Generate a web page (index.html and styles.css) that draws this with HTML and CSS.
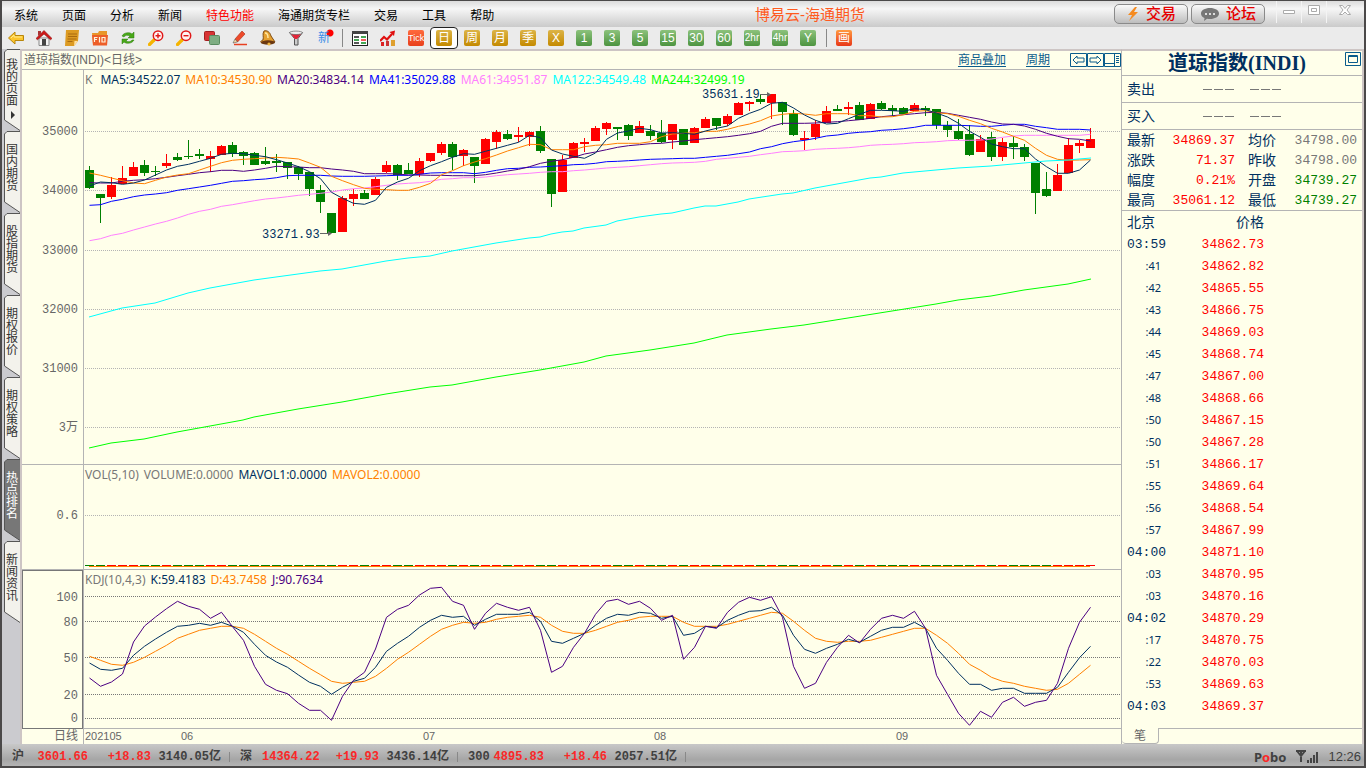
FILE: index.html
```html
<!DOCTYPE html>
<html lang="zh-CN">
<head>
<meta charset="utf-8">
<title>博易云-海通期货</title>
<link rel="stylesheet" href="styles.css">
</head>
<body>
<div class="app">
  <header class="menubar">
    <nav class="menus">
      <button>系统</button><button>页面</button><button>分析</button><button>新闻</button><button class="hot">特色功能</button><button>海通期货专栏</button><button>交易</button><button>工具</button><button>帮助</button>
    </nav>
    <h1 class="app-title">博易云-海通期货</h1>
    <div class="window-side">
      <button class="pill"><svg width="14" height="16" viewBox="0 0 14 16"><path d="M9 1L2 9h4l-3 6 9-9H8l3-5z" fill="#f58a1f"/></svg>交易</button>
      <button class="pill"><svg width="20" height="16" viewBox="0 0 20 16"><path d="M10 2c5 0 9 2.300 9 5.500S15 13 10 13c-1 0-2 0-3-.3L4 15l.5-3C2.300 11 1 9.500 1 7.500 1 4.300 5 2 10 2z" fill="#777"/><path d="M5 7h2v2H5zM9 7h2v2H9zM13 7h2v2h-2z" fill="#ddd"/></svg>论坛</button>
      <div class="win-controls">
        <button aria-label="最小化"><svg width="14" height="12" viewBox="0 0 14 12"><path d="M1.500 6.500h11v3h-11z" fill="#fff" stroke="#aaa"/></svg></button>
        <button aria-label="还原"><svg width="14" height="12" viewBox="0 0 14 12"><path d="M1.500 1.500h11v9h-11zM4.500 4.500h5v3h-5z" fill="#fff" stroke="#aaa"/></svg></button>
        <button aria-label="关闭"><svg width="14" height="12" viewBox="0 0 14 12"><path d="M1.500 1.500h3l2.500 3 2.500-3h3L9 6l3.500 4.500h-3L7 8l-2.500 2.500h-3L5 6z" fill="#fff" stroke="#aaa"/></svg></button>
      </div>
    </div>
  </header>

  <div class="toolbar">
    <button aria-label="后退"><svg viewBox="0 0 16 16"><path d="M.5 8L7 2v3.500h8.500v5H7V14z" fill="#fcc52c" stroke="#b8860b"/><path d="M3 8l3-3v2h8" fill="none" stroke="#ffe98a"/></svg></button>
    <button aria-label="首页"><svg viewBox="0 0 16 16"><path d="M3 8h10v7.500H3z" fill="#f4f4f4" stroke="#888"/><path d="M0 8.500L8 .5l8 8-1.500 1.200L8 4 1.500 9.700z" fill="#d01818" stroke="#8c1010" stroke-width=".6"/><path d="M2 1h3v3L2 6z" fill="#a33"/><path d="M6 9h4v6.500H6z" fill="#444"/></svg></button>
    <button aria-label="便笺"><svg viewBox="0 0 16 16"><path d="M2 0h13l-1 11-4 5H1z" fill="#dc9a22"/><path d="M10 16l.5-5H14z" fill="#ffe0a0"/><path d="M4 4h9M4 6.500h9M3.500 9h9M3.500 11.500h5" stroke="#a96a10"/></svg></button>
    <button aria-label="F10"><svg viewBox="0 0 16 16"><path d="M0 3h6l1-2h8v13H1z" fill="#e8962a"/><path d="M0 5h16l-1 10.500H1z" fill="#ed5e28"/><path d="M2.500 12V7.500h3M2.500 9.500H5M7.500 7v5.500M10 7.500h3V12h-3z" stroke="#fff3dc" stroke-width="1.200" fill="none"/></svg></button>
    <button aria-label="刷新"><svg viewBox="0 0 16 16"><path d="M2 6c2-4 8-4 10-2l2-2v6H8l2-2C8 5 5 5 4 7zM14 10c-2 4-8 4-10 2l-2 2V9h6l-2 2c2 1 5 1 6-1z" fill="#48a818" stroke="#2b7a0c" stroke-width=".5"/></svg></button>
    <button aria-label="放大"><svg viewBox="0 0 16 16"><path d="M1.500 14.500L6 10" stroke="#f5b400" stroke-width="3.200" stroke-linecap="round"/><circle cx="10" cy="5.700" r="4.700" fill="#fff3f3" stroke="#e01818" stroke-width="1.500"/><path d="M7.500 5.700h5M10 3.200v5" stroke="#e01818" stroke-width="1.400"/></svg></button>
    <button aria-label="缩小"><svg viewBox="0 0 16 16"><path d="M1.500 14.500L6 10" stroke="#f5b400" stroke-width="3.200" stroke-linecap="round"/><circle cx="10" cy="5.700" r="4.700" fill="#fff3f3" stroke="#e01818" stroke-width="1.500"/><path d="M7.500 5.700h5" stroke="#e01818" stroke-width="1.400"/></svg></button>
    <button aria-label="叠加"><svg viewBox="0 0 16 16"><rect x=".5" y="1.500" width="10" height="9" rx="1" fill="#d83434" stroke="#a32020"/><rect x="5.500" y="5.500" width="10" height="9" rx="1" fill="#7fae83" stroke="#5a8c60"/></svg></button>
    <button aria-label="画线"><svg viewBox="0 0 16 16"><path d="M3 9l7-8 3 3-7.500 8z" fill="#ee4a2a" stroke="#a82c14" stroke-width=".6"/><path d="M3 9l2.500 3L1 13z" fill="#f8d8a0" stroke="#444" stroke-width=".5"/><path d="M2 14.500h13" stroke="#e84020" stroke-width="1.500"/></svg></button>
    <button aria-label="预警"><svg viewBox="0 0 16 16"><path d="M4 1c3-1 6 1 7 5l4 6-12 1c-3 0-3-2 0-3 1-3-1-6 1-9z" fill="#e5a030" stroke="#804c10"/><path d="M5 3c2 0 3 2 3 5" stroke="#ffe6a0" stroke-width="1.500" fill="none"/><ellipse cx="8" cy="12.500" rx="7" ry="2.200" fill="#6b3810"/><circle cx="9" cy="14" r="1.600" fill="#f0b840"/></svg></button>
    <button aria-label="筛选"><svg viewBox="0 0 16 16"><path d="M1.500 2.500h13L10 8.500v6.500H6.500V8.500z" fill="#ccc" stroke="#555"/><path d="M3 4h10l-4 5H7z" fill="#e42438"/><ellipse cx="8" cy="2.800" rx="6.500" ry="1.700" fill="#eee" stroke="#666" stroke-width=".7"/></svg></button>
    <button class="new-mark">新</button>
    <i class="divider"></i>
    <button aria-label="列表"><svg viewBox="0 0 16 16"><rect x=".5" y="1.500" width="15" height="14" fill="#fff" stroke="#222"/><path d="M0 2.500h16" stroke="#444" stroke-width="3"/><path d="M2 7h5M2 13h5" stroke="#222" stroke-width="1.300"/><path d="M9 7h5M9 13h5M2 10h5" stroke="#098a1e" stroke-width="1.300"/><path d="M9 10h5" stroke="#e00" stroke-width="1.300"/></svg></button>
    <button aria-label="走势"><svg viewBox="0 0 16 16"><path d="M1 12h3v4H1z" fill="#d22"/><path d="M6 11h3v5H6z" fill="#c33"/><path d="M11 10h4v6h-4z" fill="#dfa030"/><path d="M0 11l4-4 3 2.500L12 4" stroke="#e01010" stroke-width="2.200" fill="none"/><path d="M9.500 2L15 .5 14 6z" fill="#e01010"/></svg></button>
    <button><span class="chip tick">Tick</span></button>
    <button class="selected"><span class="chip gold">日</span></button>
    <button><span class="chip gold">周</span></button>
    <button><span class="chip gold">月</span></button>
    <button><span class="chip gold">季</span></button>
    <button><span class="chip gold">X</span></button>
    <button><span class="chip green">1</span></button>
    <button><span class="chip green">3</span></button>
    <button><span class="chip green">5</span></button>
    <button><span class="chip green">15</span></button>
    <button><span class="chip green">30</span></button>
    <button><span class="chip green">60</span></button>
    <button><span class="chip green small">2hr</span></button>
    <button><span class="chip green small">4hr</span></button>
    <button><span class="chip green">Y</span></button>
    <i class="divider"></i>
    <button><span class="chip draw">画</span></button>
  </div>

  <main class="workspace">
    <aside class="side-tabs">
      <button><svg viewBox="0 0 16 82"><path d="M16 .5H3L.5 3v68L16 81.500"/></svg><span>我的页面</span><b></b></button>
      <button><svg viewBox="0 0 16 82"><path d="M16 .5H3L.5 3v68L16 81.500"/></svg><span>国内期货</span></button>
      <button><svg viewBox="0 0 16 82"><path d="M16 .5H3L.5 3v68L16 81.500"/></svg><span>股指期货</span></button>
      <button><svg viewBox="0 0 16 82"><path d="M16 .5H3L.5 3v68L16 81.500"/></svg><span>期权报价</span></button>
      <button><svg viewBox="0 0 16 82"><path d="M16 .5H3L.5 3v68L16 81.500"/></svg><span>期权策略</span></button>
      <button class="active"><svg viewBox="0 0 16 82"><path d="M16 .5H3L.5 3v68L16 81.500"/></svg><span>热点排名</span></button>
      <button><svg viewBox="0 0 16 82"><path d="M16 .5H3L.5 3v68L16 81.500"/></svg><span>新闻资讯</span></button>
    </aside>

    <section class="chart">
      <div class="chart-head">
        <span>道琼指数(INDI)&lt;日线&gt;</span>
        <div class="chart-links">
          <a href="#">商品叠加</a><a href="#">周期</a>
          <svg width="51" height="15" viewBox="0 0 51 15" fill="none" stroke="#0a5c8c"><path d="M.5.5h16v13H.5zM17.500.5h16v13h-16zM34.500.5h16v13h-16zM34.500 10.500h10M44.500.5v13M3 7l4-4v2h7v4H7v2zM31 7l-4-4v2h-7v4h7v2zM46 3.500h3M46 5.500h3M46 7.500h3M46 9.500h3"/></svg>
        </div>
      </div>
      <div class="panels">
        <svg class="axis" viewBox="0 0 61 394">
          <text x="56" y="65">35000</text><text x="56" y="124">34000</text><text x="56" y="184">33000</text><text x="56" y="243">32000</text><text x="56" y="302">31000</text><text x="56" y="361">3万</text>
        </svg>
        <div class="plot">
          <svg id="price" viewBox="0 0 1037 394" preserveAspectRatio="none"></svg>
          <p class="legend"><span class="c-gray key">K</span><span class="c-navy">MA5:34522.07</span><span class="c-orange">MA10:34530.90</span><span class="c-indigo">MA20:34834.14</span><span class="c-blue">MA41:35029.88</span><span class="c-pink">MA61:34951.87</span><span class="c-cyan">MA122:34549.48</span><span class="c-lime">MA244:32499.19</span></p>
        </div>
        <svg class="axis" viewBox="0 0 61 104"><text x="56" y="54">0.6</text></svg>
        <div class="plot">
          <svg id="volume" viewBox="0 0 1037 104" preserveAspectRatio="none"></svg>
          <p class="legend"><span class="c-gray">VOL(5,10)</span><span class="c-gray">VOLUME:0.0000</span><span class="c-navy">MAVOL1:0.0000</span><span class="c-orange">MAVOL2:0.0000</span></p>
        </div>
        <svg class="axis boxed" viewBox="0 0 59 156"><text x="55" y="29">100</text><text x="55" y="54">80</text><text x="55" y="90">50</text><text x="55" y="127">20</text><text x="55" y="150">0</text></svg>
        <div class="plot">
          <svg id="kdj" viewBox="0 0 1037 158" preserveAspectRatio="none"></svg>
          <p class="legend"><span class="c-gray">KDJ(10,4,3)</span><span class="c-navy">K:59.4183</span><span class="c-orange">D:43.7458</span><span class="c-indigo">J:90.7634</span></p>
        </div>
        <div class="period">日线</div>
        <svg class="dates" viewBox="0 0 1037 15" preserveAspectRatio="xMinYMid"><text x="1" y="11">202105</text><text x="97" y="11">06</text><text x="339" y="11">07</text><text x="570" y="11">08</text><text x="812" y="11">09</text></svg>
      </div>
    </section>

    <section class="quote">
      <div class="quote-title"><h2>道琼指数(INDI)</h2>
        <button aria-label="最大化"><svg width="16" height="14" viewBox="0 0 16 14" fill="none" stroke="#0a5c8c"><path d="M.5.5h15v13H.5zM3.500 3.500h9v7h-9zM3.500 4.500h9"/></svg></button>
      </div>
      <div class="side-row"><span>卖出</span><i></i><i></i><i></i><i class="far"></i><i></i><i></i></div>
      <div class="side-row"><span>买入</span><i></i><i></i><i></i><i class="far"></i><i></i><i></i></div>
      <table class="facts">
        <tr><th>最新</th><td class="up">34869.37</td><th>均价</th><td class="flat">34798.00</td></tr>
        <tr><th>涨跌</th><td class="up">71.37</td><th>昨收</th><td class="flat">34798.00</td></tr>
        <tr><th>幅度</th><td class="up">0.21%</td><th>开盘</th><td class="down">34739.27</td></tr>
        <tr><th>最高</th><td class="up">35061.12</td><th>最低</th><td class="down">34739.27</td></tr>
      </table>
      <table class="ticks">
        <thead><tr><th>北京</th><th>价格</th><th></th></tr></thead>
        <tbody id="ticks"></tbody>
      </table>
      <div class="quote-foot"><button>笔</button><i></i></div>
    </section>
  </main>

  <footer class="status">
    <div class="index"><span>沪</span><b>3601.66</b><b>+18.83</b><span>3140.05亿</span><i></i></div>
    <div class="index"><span>深</span><b>14364.22</b><b>+19.93</b><span>3436.14亿</span><i></i></div>
    <div class="index"><span>300</span><b>4895.83</b><b>+18.46</b><span>2057.51亿</span><i></i></div>
    <div class="status-right"><strong>P<em>o</em>bo</strong>
      <svg width="22" height="14" viewBox="0 0 22 14" fill="none" stroke="#444" stroke-width="2"><path d="M0 1h10M1 1l4 5 4-5M5 1v11M12 10v3M15 8v5M18 5v8M21 2v11" /></svg>
      <time>12:26</time></div>
  </footer>
</div>
<script src="app.js"></script>
</body>
</html>
```
FILE: styles.css
```css
* { box-sizing: border-box; }
body { margin: 0; font: 12px/16px "Liberation Sans", "Noto Sans CJK SC", sans-serif; color: #000; }
button { margin: 0; padding: 0; border: 0; background: none; font: inherit; color: inherit; }
h1, h2, p { margin: 0; font-weight: normal; }
i { font-style: normal; }
svg { display: block; }

.app { height: 100vh; display: flex; flex-direction: column; border: solid #4b4949; border-width: 1px 2px 2px; background: #ebebeb; overflow: hidden; }

.menubar { height: 26px; flex: none; display: flex; background: linear-gradient(#dcdcdc, #f6f6f6 30%, #cacaca); }
.menus { display: flex; }
.menus button { padding: 3px 12px 0; }
.menus .hot { color: #f00; }
.app-title { margin: 0 auto; font-size: 15px; line-height: 28px; color: #ff5a1e; white-space: nowrap; }
.window-side { display: flex; align-items: flex-start; gap: 3px; }
.pill { width: 74px; height: 20px; margin-top: 3px; display: flex; align-items: center; justify-content: center; gap: 6px; border: 1px solid #8a8a8a; border-radius: 5px; background: linear-gradient(#fafafa, #bdbdbd); font-size: 15px; font-weight: 500; color: #e60000; }
.win-controls { display: flex; margin-left: 8px; }
.win-controls button { width: 25px; height: 22px; padding: 1px 0 6px; display: grid; place-items: center; border-left: 1px solid #f4f4f4; }
.win-controls button:last-child { width: 38px; }

.toolbar { height: 22px; flex: none; display: flex; background: #ebebeb; }
.toolbar button { width: 28px; height: 22px; display: grid; place-items: center; }
.toolbar svg { width: 16px; height: 16px; }
.toolbar .divider { width: 8px; margin: 2px 0; background: linear-gradient(#888, #888) center / 1px 100% no-repeat; }
.toolbar .selected { border: 1px solid #222; border-radius: 4px; background: #fff; }
.toolbar .new-mark { color: #3d8ee8; background: radial-gradient(circle at 20px 6px, #f00 3px, transparent 4px); }
.chip { width: 16px; height: 16px; border-radius: 2px; color: #fff; font-size: 12px; line-height: 16px; text-align: center; overflow: hidden; }
.chip.gold { background: linear-gradient(#dcb448, #c48a00); }
.chip.green { background: linear-gradient(#8cc27c, #4d9440); }
.chip.draw { background: linear-gradient(#ff9a40, #e83818); }
.chip.tick { background: linear-gradient(#ff6a3c, #e8401c); font-size: 9px; }
.chip.small { font-size: 10px; }

.workspace { flex: 1; min-height: 0; display: flex; }
.side-tabs { width: 18px; flex: none; padding-left: 2px; background: #cbcbcf; }
.side-tabs button { display: flex; flex-direction: column; justify-content: flex-start; position: relative; width: 16px; height: 82px; padding: 13px 2px 0; color: #333; }
.side-tabs svg { position: absolute; inset: 0; width: 16px; height: 82px; fill: #f3f2ec; stroke: #555; z-index: 0; }
.side-tabs span { position: relative; display: block; width: 12px; line-height: 12px; word-break: break-all; }
.side-tabs button:first-child { padding-top: 10px; }
.side-tabs b { position: relative; display: block; width: 0; margin: 4px 0 0 5px; border: 4px solid transparent; border-left-color: #333; border-right: 0; }
.side-tabs .active { color: #fff; }
.side-tabs .active svg { fill: #777; }

.chart, .quote { border-top: 2px solid #cdc5c4; background: #ffffea; }
.chart { flex: 1; min-width: 0; display: flex; flex-direction: column; border-left: 2px solid #cdc5c4; }
.chart-head { height: 19px; flex: none; display: flex; align-items: center; justify-content: space-between; padding: 0 0 0 2px; border-bottom: 1px solid #b4b4b4; color: #666; }
.chart-links { display: flex; align-items: center; gap: 20px; }
.chart-links a { color: #0a5c8c; text-underline-offset: 2px; }
.panels { flex: 1; min-height: 0; display: grid; grid-template-columns: 61px minmax(0, 1fr); grid-template-rows: minmax(0, 395fr) minmax(0, 105fr) minmax(0, 159fr) 15px; }
.axis { width: 100%; height: 100%; border-bottom: 1px solid #b4b4b4; }
.axis text { font: 12px "Liberation Mono", "Noto Sans CJK SC", monospace; text-anchor: end; fill: #666; }
.axis.boxed { border: 1px solid #777; }
.plot { position: relative; border-left: 1px solid #b4b4b4; border-bottom: 1px solid #b4b4b4; }
.plot svg { width: 100%; height: 100%; }
.plot text { font: 12px "Liberation Mono", monospace; fill: #003060; }
.legend { position: absolute; left: 1px; top: 1px; display: flex; gap: 5px; font: 12px/17px "Noto Sans", sans-serif; white-space: nowrap; }
.legend .key { margin-right: 3px; }
.period { padding-right: 5px; text-align: right; line-height: 15px; color: #666; }
.dates { width: 100%; height: 100%; border-left: 1px solid #b4b4b4; }
.dates text { font: 11px "Liberation Sans", sans-serif; fill: #666; }

.c-gray { color: #777; }
.c-navy { color: #003060; }
.c-orange { color: #ff8000; }
.c-indigo { color: #4b0082; }
.c-blue { color: #00f; }
.c-pink { color: #ff80ff; }
.c-cyan { color: #0ff; }
.c-lime { color: #0f0; }

.grid-light { stroke: #b4b4b4; stroke-dasharray: 1 1; }
.grid-dark { stroke: #777; stroke-dasharray: 1 1; }
.line { fill: none; stroke-width: 1; }
.rise { fill: #f00; }
.fall { fill: #008000; }
.bars { shape-rendering: crispEdges; }

.quote { width: 243px; flex: none; display: flex; flex-direction: column; border-left: 1px solid #b4b4b4; border-right: 2px solid #cdc5c4; color: #003060; font-size: 14px; }
.quote-title { height: 25px; flex: none; display: flex; position: relative; justify-content: center; border-bottom: 1px solid #b4b4b4; }
.quote-title h2 { padding-right: 10px; font: bold 20px/24px "Liberation Serif", "Noto Sans CJK SC", serif; }
.quote-title button { position: absolute; right: 1px; top: 1px; }
.side-row { height: 27px; flex: none; display: flex; align-items: center; padding-left: 5px; border-bottom: 1px solid #b4b4b4; }
.side-row span { width: 76px; }
.side-row i { width: 9px; height: 1px; margin-right: 2px; background: #777; }
.side-row .far { margin-left: 14px; }
table { border-collapse: collapse; }
th, td { padding: 0; font-weight: normal; text-align: left; }
td { font: 13px "Liberation Mono", monospace; }
.facts { width: 230px; margin: 0 5px; table-layout: fixed; }
.facts tr { height: 20px; }
.facts th:first-child { width: 28px; }
.facts th { width: 40px; }
.facts td { text-align: right; }
.facts td:nth-child(2) { width: 93px; padding-right: 13px; }
.ticks { border-top: 1px solid #b4b4b4; table-layout: fixed; width: 100%; }
.ticks tr { height: 22px; }
.ticks td { padding-top: 2px; }
.ticks th:first-child, .ticks td:first-child { width: 60px; padding-left: 5px; }
.ticks th:nth-child(2), .ticks td:nth-child(2) { width: 82px; text-align: right; }
.ticks td:nth-child(2) { color: #f00; }
.ticks .sec { padding: 0 21px 0 0; text-align: right; font: 11px "Noto Sans", sans-serif; }
.up { color: #f00; }
.down { color: #008000; }
.flat { color: #777; }
.quote-foot { margin-top: auto; height: 16px; flex: none; display: flex; }
.quote-foot button { width: 37px; height: 16px; border: 1px solid #b4b4b4; border-width: 0 1px 1px 0; border-radius: 0 0 4px 4px; font-size: 12px; line-height: 14px; color: #666; }
.quote-foot i { flex: 1; border-top: 1px solid #b4b4b4; }

.status { height: 22px; flex: none; display: flex; align-items: center; padding: 3px 0 0 10px; background: linear-gradient(#c8c8c8, #a6a6a6 70%, #b4b4b4); font: bold 12px/16px "Liberation Mono", "Noto Sans CJK SC", monospace; color: #404040; }
.index { width: 228px; display: grid; grid-template-columns: 22px 54px 63px 70px 9px; text-align: right; }
.index span:first-child { text-align: left; }
.index b { color: #fa2828; }
.index i { margin: 3px 0; border-right: 1px solid #888; }
.status-right { margin-left: auto; padding-right: 3px; display: flex; align-items: center; gap: 10px; }
.status-right strong { font: bold 13px/16px "Noto Sans", sans-serif; }
.status-right em { font-style: normal; color: #fa2828; }
.status-right time { font: 13px/16px "Liberation Sans", sans-serif; }
```
FILE: app.js
```js
const STEP = 11, UNIT = 3;

// Each session: direction, high, body top, body bottom, low (in thirds of a pixel).
const candles = `G258,270,324,327 G342,342,354,429 R291,315,351,357 R258,294,312,312 R246,261,288,288 G240,255,279,288
G258,273,276,288 R222,249,258,264 G219,231,240,243 G180,228,231,237 G207,222,228,237 R213,228,237,276 R195,198,225,225
G186,195,222,231 G213,216,228,255 G216,219,255,255 G201,243,252,255 G222,243,249,276 G246,246,264,297 G258,261,282,300
G276,276,327,348 G315,330,366,399 G399,399,459,459 R348,354,456,456 R327,342,357,378 G330,339,357,357 R291,297,345,345
R243,255,276,279 G252,255,285,300 G249,270,282,282 R234,243,282,291 R219,219,243,246 R186,192,219,225 G186,192,231,270
R207,210,228,258 G231,231,258,309 R174,177,252,252 R150,156,186,207 G150,162,177,180 R141,165,171,186 R153,156,171,198
G138,153,213,219 G237,237,342,381 R225,240,336,336 R186,189,234,234 R174,186,192,216 R138,144,183,183 R126,129,147,165
G141,141,147,180 G132,135,168,180 R123,138,159,159 G135,153,168,180 G120,159,186,189 R132,132,180,207 G147,147,195,195
R141,144,189,189 R111,117,144,144 G114,114,138,150 R102,108,132,138 R66,69,105,105 R63,66,72,93 G42,57,66,72
R42,42,69,117 G66,66,96,135 G90,99,165,168 R153,174,180,210 R120,132,171,180 R78,93,129,129 G75,87,93,93
R66,81,87,105 G66,75,120,120 R69,72,117,117 G63,69,87,90 G75,84,93,108 G81,84,102,102 R69,75,93,93 G78,84,90,108
G87,87,135,147 G123,135,150,171 G117,153,177,180 G135,162,225,228 R165,177,216,216 G156,171,231,243 R174,186,231,243
G168,189,201,237 G192,201,231,243 G249,249,339,402 G276,327,348,351 R252,285,333,333 R174,195,279,279 R180,189,198,219
R144,177,204,204`.split(/\s+/).map(s => ({ rise: s[0] === "R", v: s.slice(1).split(",").map(Number) }));

const averages = [
  ["#ff80ff", "482,476,466,460,450,441,432,424,414,403,394,388,379,374,368,362,357,354,350,346,343,340,336,330,326,324,320,316,312,310,308,304,298,296,293,293,291,287,284,282,280,277,275,275,272,270,267,264,262,260,257,254,251,249,248,247,244,238,235,232,229,224,220,215,214,212,208,206,205,203,200,196,194,193,191,188,187,185,182,181,181,180,177,172,168,166,166,166,166,166,166,163"],
  ["#0000ff", "376,374,364,358,350,345,342,338,331,326,321,316,310,304,302,299,297,293,287,286,286,286,288,289,289,289,288,287,286,286,283,279,278,278,278,281,277,271,266,265,262,261,259,257,254,253,250,245,244,242,240,238,237,236,235,235,232,229,226,221,216,206,200,191,185,181,175,168,165,160,157,155,151,149,146,142,136,136,136,136,137,139,139,136,133,133,139,143,148,148,148,150"],
  ["#4b0082", "308,309,309,304,301,299,296,292,287,283,278,275,271,271,274,270,265,259,260,261,263,263,267,270,274,281,281,281,282,285,285,286,286,287,287,287,284,279,273,268,260,250,244,239,232,222,216,209,202,197,194,191,190,186,183,179,176,173,170,166,161,154,139,130,130,130,129,127,125,122,119,115,110,107,104,101,98,97,100,106,112,118,126,132,133,138,148,160,169,176,178,183"],
  ["#ff8000", "279,286,294,302,309,311,301,291,285,281,270,259,248,241,238,236,234,232,234,237,249,262,289,302,314,325,328,329,331,331,322,310,284,272,257,246,236,225,213,203,193,194,209,209,209,200,196,194,190,190,190,185,170,162,160,158,154,154,148,139,132,122,108,103,100,102,106,101,101,101,107,107,111,110,104,94,92,98,101,109,121,131,145,156,169,181,205,226,238,241,240,239"],
  ["#003060", "318,306,308,313,309,300,285,270,259,253,244,235,223,220,221,226,230,239,249,260,275,296,337,355,370,373,361,322,306,295,272,257,245,232,221,223,214,205,196,187,166,173,210,222,229,235,219,178,159,153,145,149,159,158,160,163,153,145,138,115,100,88,70,67,84,105,121,132,130,116,103,91,91,92,94,86,89,99,111,130,154,172,192,200,206,206,237,260,280,280,270,240"]
];

const ma122 = "5,247 38,238 71,233 104,223 126,218 148,214 170,210 192,207 214,204 236,201 258,199 280,195 302,191 324,188 346,186 368,181 390,177 412,173 445,168 456,167 467,164 478,162 489,161 500,158 522,155 533,151 555,147 577,144 588,143 610,138 621,136 632,136 654,132 665,129 698,124 709,123 731,118 764,112 786,108 797,107 819,103 841,101 874,98 907,96 940,93 962,91 984,90 995,89 1007,88";
const ma244 = "5,378 27,373 60,369 93,362 126,356 159,350 170,347 214,339 258,332 302,324 346,317 368,315 412,307 456,300 500,292 522,286 566,280 610,273 643,265 687,259 720,255 764,248 808,241 852,234 874,230 907,226 940,220 984,214 1007,209";

const kdj = [
  ["#ff8000", "289,301,313,316,307,292,274,256,235,223,211,205,199,199,205,223,244,265,283,304,325,344,364,370,367,364,349,325,298,277,253,229,208,196,187,190,187,178,172,169,166,172,196,214,220,220,211,199,187,181,172,169,169,169,187,199,199,199,193,184,175,166,157,160,184,211,235,244,247,244,244,241,232,223,214,205,205,226,250,280,313,331,352,364,370,379,385,391,388,370,343,316"],
  ["#003060", "309,328,331,325,286,259,237,217,199,196,190,196,187,199,217,253,286,306,322,345,367,379,403,382,364,355,322,274,250,229,202,181,166,172,169,196,178,163,163,163,157,184,244,250,235,220,196,175,163,166,157,160,175,169,226,220,199,203,181,166,154,152,142,166,226,268,280,265,253,238,247,229,211,202,202,187,205,265,301,340,373,373,391,385,385,400,400,400,382,337,293,259"],
  ["#4b0082", "354,379,366,342,246,198,171,146,124,139,148,175,157,200,241,319,373,391,401,430,451,451,481,409,361,337,267,172,148,136,105,85,82,124,136,208,160,130,142,151,142,211,337,319,262,220,163,124,118,133,124,145,181,166,298,262,199,205,157,127,112,121,110,172,319,385,370,307,262,226,249,208,175,166,175,154,205,346,403,460,496,454,472,427,412,439,427,421,370,265,187,142"]
];

const grid = (ys, cls) => ys.map(y => `<path class="${cls}" d="M1 ${y + 0.5}H1037"/>`).join("");
const poly = (color, points) => `<polyline class="line" stroke="${color}" points="${points}"/>`;
const series = ([color, list], offset) =>
  poly(color, list.split(",").map((v, i) => `${5.5 + STEP * i},${(offset + v / UNIT).toFixed(1)}`).join(" "));
const rect = (x, y, w, h) => `<rect x="${x}" y="${y}" width="${w}" height="${h}"/>`;

const bars = candles.map(({ rise, v }, i) => {
  const [high, top, bottom, low] = v.map(n => 10 + Math.round(n / UNIT));
  return `<g class="${rise ? "rise" : "fall"}">${rect(5 + STEP * i, high, 1, low - high)}${rect(1 + STEP * i, top, 9, bottom - top)}</g>`;
}).join("");

document.getElementById("price").innerHTML =
  grid([61, 120, 180, 239, 298, 357], "grid-light") +
  `<g class="bars">${bars}</g>` +
  averages.map(a => series(a, 10)).join("") +
  poly("#00ffff", ma122) + poly("#00ff00", ma244) +
  `<text x="178" y="168">33271.93</text><path d="M236 163.500h10" stroke="#666"/><path d="M244 161l4 2.500-4 2.500z" fill="#666"/>` +
  `<text x="618" y="28">35631.19</text><path d="M676 24.500h9" stroke="#666"/><path d="M683 22l4 2.500-4 2.500z" fill="#666"/>`;

document.getElementById("volume").innerHTML =
  grid([50], "grid-light") +
  `<g class="bars">${candles.map((c, i) => `<g class="${c.rise ? "rise" : "fall"}">${rect(1 + STEP * i, 100, 9, 1)}</g>`).join("")}` +
  `<path d="M5 101.500H1006" stroke="#ff8000"/></g>`;

document.getElementById("kdj").innerHTML =
  grid([26, 51, 87, 124, 148], "grid-dark") + kdj.map(k => series(k, -10)).join("");

const ticks = `03:59 34862.73|:41 34862.82|:42 34865.55|:43 34866.75|:44 34869.03|:45 34868.74|:47 34867.00|:48 34868.66|:50 34867.15|:50 34867.28|:51 34866.17|:55 34869.64|:56 34868.54|:57 34867.99|04:00 34871.10|:03 34870.95|:03 34870.16|04:02 34870.29|:17 34870.75|:22 34870.03|:53 34869.63|04:03 34869.37`;
document.getElementById("ticks").innerHTML = ticks.split("|").map(row => {
  const [time, price] = row.split(" ");
  return `<tr><td${time[0] === ":" ? ' class="sec"' : ""}>${time}</td><td>${price}</td><td></td></tr>`;
}).join("");
```
